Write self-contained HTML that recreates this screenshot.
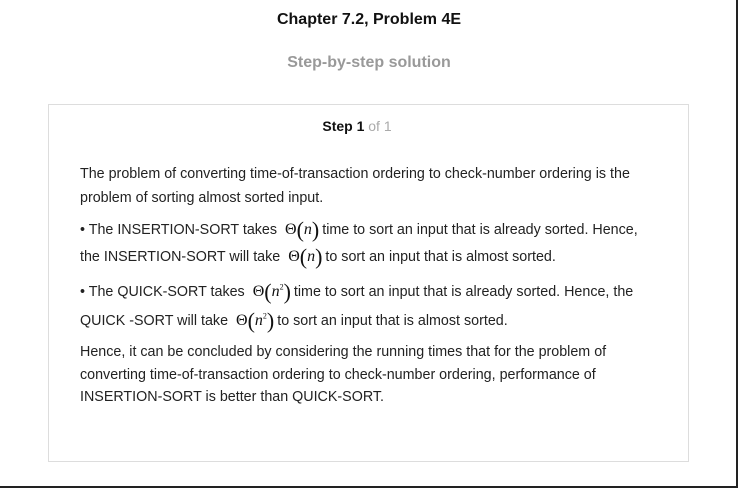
<!DOCTYPE html>
<html><head><meta charset="utf-8"><style>
html,body{margin:0;padding:0;background:#fff;}
body{width:738px;height:489px;position:relative;overflow:hidden;font-family:"Liberation Sans",Arial,sans-serif;color:#222;}
.frame{position:absolute;left:0;top:0;width:736px;height:486px;border-right:2px solid #222;border-bottom:2px solid #222;}
h1{position:absolute;top:11px;left:0;width:738px;text-align:center;font-size:16px;font-weight:bold;margin:0;color:#111;}
h2{position:absolute;top:54px;left:0;width:738px;text-align:center;font-size:16px;font-weight:bold;margin:0;color:#999;}
.box{position:absolute;left:48px;top:104px;width:639px;height:356px;border:1px solid #ddd;}
.step{position:absolute;top:118px;left:0;width:714px;text-align:center;font-size:14px;font-weight:bold;color:#111;}
.step span{font-weight:normal;color:#aaa;}
.p{position:absolute;left:80px;font-size:14.3px;color:#222;white-space:nowrap;}
.m{font-family:"Liberation Serif",serif;font-size:16px;color:#111;padding:0 3px 0 4px;}
.m i{font-size:16px;}
.big{font-size:22px;vertical-align:-3px;}
sup{font-size:8px;}
</style></head><body>
<div class="frame"></div>
<h1>Chapter 7.2, Problem 4E</h1>
<h2>Step-by-step solution</h2>
<div class="box"></div>
<div class="step">Step 1 <span>of 1</span></div>
<div class="p" style="top:166px">The problem of converting time-of-transaction ordering to check-number ordering is the</div>
<div class="p" style="top:190px">problem of sorting almost sorted input.</div>
<div class="p" style="top:217px">• The INSERTION-SORT takes <span class="m">Θ<span class="big">(</span><i>n</i><span class="big">)</span></span>time to sort an input that is already sorted. Hence,</div>
<div class="p" style="top:244px">the INSERTION-SORT will take <span class="m">Θ<span class="big">(</span><i>n</i><span class="big">)</span></span>to sort an input that is almost sorted.</div>
<div class="p" style="top:279px">• The QUICK-SORT takes <span class="m">Θ<span class="big">(</span><i>n</i><sup>2</sup><span class="big">)</span></span>time to sort an input that is already sorted. Hence, the</div>
<div class="p" style="top:308px">QUICK -SORT will take <span class="m">Θ<span class="big">(</span><i>n</i><sup>2</sup><span class="big">)</span></span>to sort an input that is almost sorted.</div>
<div class="p" style="top:344px">Hence, it can be concluded by considering the running times that for the problem of</div>
<div class="p" style="top:367px">converting time-of-transaction ordering to check-number ordering, performance of</div>
<div class="p" style="top:389px">INSERTION-SORT is better than QUICK-SORT.</div>
</body></html>
